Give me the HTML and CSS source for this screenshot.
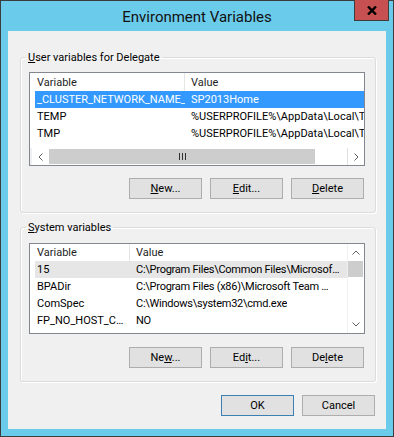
FILE: index.html
```html
<!DOCTYPE html>
<html lang="en">
<head>
    <meta charset="UTF-8">
    <meta name="viewport" content="width=device-width, initial-scale=1.0">
    <title>Environment Variables</title>
    <link rel="stylesheet" href="styles.css">
</head>
<body>
    <div class="window">
        <div class="titlebar">
            <span class="title">Environment Variables</span>
            <div class="close">
                <svg width="10" height="9" viewBox="0 0 10 9">
                    <path d="M1 0.5 L9 8.5 M9 0.5 L1 8.5" stroke="#000" stroke-width="2.4" fill="none"/>
                </svg>
            </div>
        </div>

        <div class="client">
            <!-- Variabili utente -->
            <fieldset class="group">
                <legend><u>U</u>ser variables for Delegate</legend>
                <div class="listview lv-user">
                    <div class="lv-main">
                        <div class="lv-head">
                            <div class="hcell">Variable</div>
                            <div class="hcell">Value</div>
                        </div>
                        <div class="lv-row selected"><div class="cell">_CLUSTER_NETWORK_NAME_</div><div class="cell">SP2013Home</div></div>
                        <div class="lv-row"><div class="cell">TEMP</div><div class="cell">%USERPROFILE%\AppData\Local\Temp</div></div>
                        <div class="lv-row"><div class="cell">TMP</div><div class="cell">%USERPROFILE%\AppData\Local\Temp</div></div>
                    </div>
                    <div class="hscroll">
                        <div class="arrow">
                            <svg width="5" height="8" viewBox="0 0 5 8"><path d="M4.5 0.5 L1 4 L4.5 7.5" stroke="#606060" fill="none"/></svg>
                        </div>
                        <div class="thumb-h">
                            <svg width="7" height="7" viewBox="0 0 7 7"><path d="M0.5 0 V7 M3.5 0 V7 M6.5 0 V7" stroke="#303030" fill="none"/></svg>
                        </div>
                        <div class="track"></div>
                        <div class="arrow">
                            <svg width="5" height="8" viewBox="0 0 5 8"><path d="M0.5 0.5 L4 4 L0.5 7.5" stroke="#606060" fill="none"/></svg>
                        </div>
                    </div>
                </div>
                <div class="buttons">
                    <button><u>N</u>ew...</button>
                    <button><u>E</u>dit...</button>
                    <button><u>D</u>elete</button>
                </div>
            </fieldset>

            <!-- Variabili di sistema -->
            <fieldset class="group group-sys">
                <legend><u>S</u>ystem variables</legend>
                <div class="listview lv-sys">
                    <div class="lv-main">
                        <div class="lv-head">
                            <div class="hcell">Variable</div>
                            <div class="hcell">Value</div>
                        </div>
                        <div class="lv-row soft"><div class="cell">15</div><div class="cell">C:\Program Files\Common Files\Microsof…</div></div>
                        <div class="lv-row"><div class="cell">BPADir</div><div class="cell">C:\Program Files (x86)\Microsoft Team …</div></div>
                        <div class="lv-row"><div class="cell">ComSpec</div><div class="cell">C:\Windows\system32\cmd.exe</div></div>
                        <div class="lv-row"><div class="cell">FP_NO_HOST_C…</div><div class="cell">NO</div></div>
                    </div>
                    <div class="vscroll">
                        <div class="arrow">
                            <svg width="8" height="5" viewBox="0 0 8 5"><path d="M0.5 4.5 L4 1 L7.5 4.5" stroke="#606060" fill="none"/></svg>
                        </div>
                        <div class="thumb-v"></div>
                        <div class="track"></div>
                        <div class="arrow">
                            <svg width="8" height="5" viewBox="0 0 8 5"><path d="M0.5 0.5 L4 4 L7.5 0.5" stroke="#606060" fill="none"/></svg>
                        </div>
                    </div>
                </div>
                <div class="buttons">
                    <button>Ne<u>w</u>...</button>
                    <button>Ed<u>i</u>t...</button>
                    <button>De<u>l</u>ete</button>
                </div>
            </fieldset>

            <div class="footer">
                <button class="default">OK</button>
                <button>Cancel</button>
            </div>
        </div>
    </div>
</body>
</html>
```

FILE: styles.css
```css
* {
    margin: 0;
    padding: 0;
    box-sizing: border-box;
}

body {
    font-family: Roboto, 'Liberation Sans', sans-serif;
    font-size: 11px;
    color: #000;
    background: #fff;
}

.window {
    width: 394px;
    height: 437px;
    border: 1px solid #3d3d3d;
    background: #6bcbea;
    position: relative;
}

.titlebar {
    height: 30px;
    display: flex;
    justify-content: center;
    align-items: center;
}

.title {
    font-size: 15px;
    color: #111;
    padding-top: 1px;
}

.close {
    position: absolute;
    top: -1px;
    right: 4px;
    width: 35px;
    height: 21px;
    background: #c75050;
    border: 1px solid #3d3d3d;
    border-top: none;
    display: flex;
    justify-content: center;
    align-items: center;
}

.client {
    height: 398px;
    margin: 0 7px;
    background: #f0f0f0;
    padding: 19px 10px 0 12px;
}

/* Group box */
.group {
    min-width: 0;
    border: 1px solid #dcdcdc;
    border-radius: 3px;
    padding: 7px 10px 13px 8px;
    box-shadow: inset 1px 1px 0 #fff, 1px 1px 0 #fff;
}

.group legend {
    line-height: 15px;
    padding: 0 2px;
    margin-left: -3px;
}

.group-sys {
    margin-top: 7px;
    padding-top: 8px;
}

/* List view */
.listview {
    min-width: 0;
    border: 1px solid #828790;
    background: #fff;
    display: flex;
    overflow: hidden;
}

.lv-user {
    height: 94px;
    flex-direction: column;
    --w: 155px;
}

.lv-sys {
    height: 91px;
    --w: 100px;
}

.lv-main {
    flex: 1;
    min-width: 0;
    overflow: hidden;
    white-space: nowrap;
}

.lv-head {
    display: flex;
    height: 18px;
    align-items: stretch;
    color: #1e1e1e;
}

.lv-sys .lv-head {
    height: 17px;
}

.hcell {
    display: flex;
    align-items: center;
    padding-left: 6px;
}

.hcell:first-child {
    width: var(--w);
    flex: none;
    padding-left: 7px;
    border-right: 1px solid #e5e5e5;
}

.lv-row {
    display: flex;
    height: 17px;
    align-items: center;
    margin-left: 5px;
}

.lv-row.selected {
    background: #3399ff;
    color: #fff;
}

.lv-row.soft {
    background: #e6e6e6;
}

.cell {
    padding-left: 6px;
    overflow: hidden;
}

.cell:first-child {
    width: calc(var(--w) - 5px);
    flex: none;
    padding-left: 2px;
}

.lv-sys .cell + .cell {
    letter-spacing: -0.25px;
}

/* Scrollbars */
.hscroll {
    height: 17px;
    display: flex;
    background: #fff;
    border-left: 2px solid #f0f0f0;
}

.vscroll {
    width: 17px;
    flex: none;
    display: flex;
    flex-direction: column;
    background: #fff;
    border-left: 1px solid #f0f0f0;
}

.arrow {
    width: 17px;
    height: 17px;
    flex: none;
    display: flex;
    justify-content: center;
    align-items: center;
    background: #fff;
}

.vscroll .arrow {
    width: 16px;
}

.hscroll .arrow:last-child {
    border-left: 1px solid #e0e0e0;
}

.thumb-h {
    width: 266px;
    flex: none;
    margin: 1px 0;
    background: #cdcdcd;
    display: flex;
    justify-content: center;
    align-items: center;
}

.thumb-v {
    height: 16px;
    flex: none;
    margin: 0 1px 0 0;
    background: #cdcdcd;
}

.track {
    flex: 1;
}

/* Buttons */
.buttons, .footer {
    display: flex;
    justify-content: flex-end;
    gap: 8px;
}

.buttons {
    margin-top: 12px;
    margin-right: 1px;
}

.group-sys .buttons {
    margin-top: 13px;
}

button {
    width: 73px;
    height: 21px;
    font-family: inherit;
    font-size: 11px;
    color: #000;
    background: #e1e1e1;
    border: 1px solid #adadad;
}

button.default {
    border-color: #3c7fb1;
}

.footer {
    margin-top: 13px;
    padding-right: 1px;
}
```
